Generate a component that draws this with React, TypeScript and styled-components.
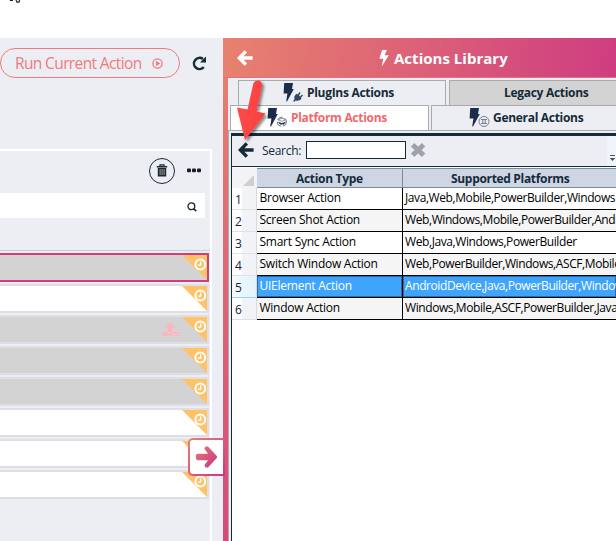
import React from 'react';
import styled, { createGlobalStyle, css } from 'styled-components';

const GlobalStyle = createGlobalStyle`
  *, *::before, *::after { box-sizing: border-box; }
  body {
    margin: 0;
    overflow: hidden;
    background: #fff;
    font-family: 'Open Sans', 'Noto Sans', sans-serif;
    color: #152b37;
  }
  svg { display: block; flex: none; }
`;

const NAVY = '#152b37';
const SURFACE = '#edeef3';

const Screen = styled.div`
  position: relative;
  display: flex;
  flex-direction: column;
  width: 616px;
  height: 541px;
  overflow: hidden;
`;
const TopStrip = styled.div`
  flex: none;
  height: 38px;
  padding-left: 9px;
`;
const Body = styled.div`
  display: flex;
  flex: 1;
  min-height: 0;
`;

/* Left side: current flow */
const FlowPane = styled.section`
  flex: none;
  width: 223px;
  display: flex;
  flex-direction: column;
  background: ${SURFACE};
`;
const RunBar = styled.div`
  display: flex;
  align-items: center;
  height: 111px;
  padding-bottom: 61px;
`;
const RunButton = styled.button`
  display: flex;
  align-items: center;
  width: 180px;
  height: 30px;
  padding: 0 0 0 14px;
  border: 1px solid #f27a7c;
  border-radius: 15px;
  background: transparent;
  color: #f27a7c;
  font: 400 15.5px/28px 'Open Sans', sans-serif;
  letter-spacing: -0.62px;
  white-space: nowrap;
`;
const RunLabel = styled.span`
  width: 137px;
  text-align: left;
`;
const RefreshSlot = styled.div`
  margin-left: 12px;
`;
const FlowBox = styled.div`
  flex: 1;
  width: 212px;
  border: solid #fff;
  border-width: 2px 2px 0 0;
`;
const FlowTools = styled.div`
  display: flex;
  align-items: center;
  justify-content: flex-end;
  gap: 12px;
  height: 42px;
  padding: 0 9px 3px 0;
`;
const TrashButton = styled.button`
  display: flex;
  align-items: center;
  justify-content: center;
  width: 26px;
  height: 26px;
  padding: 0;
  border: 1px solid ${NAVY};
  border-radius: 50%;
  background: transparent;
`;
const FilterField = styled.div`
  display: flex;
  align-items: center;
  justify-content: flex-end;
  width: 205px;
  height: 25px;
  padding: 2px 8px 0 0;
  background: #fff;
`;
const CardList = styled.div`
  display: flex;
  flex-direction: column;
  gap: 2px;
  margin-top: 32px;
  padding-top: 2px;
  border-top: 1px solid #cdced2;
`;
const Card = styled.div<{ $tone: 'gray' | 'white'; $active?: boolean }>`
  display: flex;
  justify-content: flex-end;
  width: 209px;
  height: 29px;
  border: 2px solid ${p => (p.$active ? '#d33d80' : '#dedfe5')};
  border-left: 0;
  background: ${p => (p.$tone === 'gray' ? '#d3d3d3' : '#fff')};
`;
const UploadSlot = styled.div`
  padding: 5px 3px 0 0;
`;

/* Right side: library */
const Library = styled.section`
  flex: 1;
  min-width: 0;
  display: flex;
  flex-direction: column;
  padding-left: 5px;
  background: linear-gradient(133deg, #e8836f 0px, #e07072 110px, #d95078 310px, #ce3681 440px);
`;
const LibraryHeader = styled.header`
  display: flex;
  align-items: center;
  height: 40px;
  margin-left: -5px;
  padding: 1px 0 0 14px;
  border-bottom: 1px solid #e2717b;
  color: #fff;
  background: linear-gradient(97deg, #e8826f 0, #e27272 90px, #dc6078 200px, #d44d7d 300px, #cf3c81 400px);
`;
const LibraryTitle = styled.h1`
  display: flex;
  align-items: center;
  gap: 5px;
  margin: 0 0 0 126px;
  font: 700 15px/20px 'Open Sans', sans-serif;
  letter-spacing: 0.02px;
  white-space: nowrap;
`;
const LibraryBody = styled.div`
  flex: 1;
  display: flex;
  flex-direction: column;
  min-height: 0;
  padding-top: 2px;
  background: ${SURFACE};
`;
const TabRow = styled.div<{ $indent: number; $gap: number }>`
  display: flex;
  flex: none;
  gap: ${p => p.$gap}px;
  height: 25px;
  padding-left: ${p => p.$indent}px;
  overflow: visible;
`;
const Tab = styled.button<{ $width: number; $pad: number; $kind?: 'active' | 'legacy' }>`
  display: flex;
  flex: none;
  align-items: flex-start;
  gap: 3px;
  width: ${p => p.$width}px;
  height: 25px;
  padding: 2px 0 0 ${p => p.$pad}px;
  border: 1px solid #a9abae;
  border-bottom: 0;
  background: ${SURFACE};
  color: ${NAVY};
  font: 700 12px/20px 'Open Sans', sans-serif;
  letter-spacing: -0.3px;
  white-space: nowrap;
  ${p => p.$kind === 'legacy' && css`background: #d3d3d3;`}
  ${p => p.$kind === 'active' && css`
    height: 28px;
    background: #fff;
    color: #f2686b;
  `}
`;
const TabPanel = styled.div`
  flex: 1;
  display: flex;
  flex-direction: column;
  min-height: 0;
  padding: 2px 0 0 2px;
  border: solid #a9abae;
  border-width: 1px 0 0 1px;
  background: ${SURFACE};
`;
const Grid = styled.div`
  flex: 1;
  border-left: 1px solid ${NAVY};
  border-top: 3px solid ${NAVY};
  background: #fff;
`;
const SearchBar = styled.div`
  display: flex;
  align-items: center;
  height: 31px;
  padding: 0 0 2px 6px;
  border-bottom: 1px solid ${NAVY};
  background: ${SURFACE};
  font-size: 12px;
  letter-spacing: -0.3px;
`;
const SearchLabel = styled.label`
  width: 44px;
  margin-left: 8px;
`;
const SearchInput = styled.input`
  width: 100px;
  height: 18px;
  padding: 0 4px;
  border: 1px solid ${NAVY};
  border-radius: 0;
  background: #fff;
`;
const Overflow = styled.div`
  display: flex;
  align-items: flex-end;
  width: 9px;
  height: 30px;
  margin: 2px 0 0 auto;
  padding: 0 0 4px 2px;
  background: #f0f5fc;
`;
const HeadRow = styled.div`
  display: grid;
  grid-template: 20px / 25px 146px 1fr;
  height: 21px;
  padding-top: 1px;
`;
const Corner = styled.div`
  display: flex;
  align-items: flex-end;
  justify-content: flex-end;
  padding: 0 3px 2px 0;
  background: #f3f3f5;
`;
const HeadCell = styled.div<{ $pad: number }>`
  padding-left: ${p => p.$pad}px;
  border: solid #7b8d92;
  border-width: 1px 1px 1px 0;
  background: #ced6e6;
  font: 700 12px/20px 'Open Sans', sans-serif;
  letter-spacing: -0.32px;
  white-space: nowrap;
  &:last-child { border-right: 0; }
`;
const Row = styled.div`
  display: grid;
  grid-template: 22px / 25px 146px 1fr;
  font-size: 12px;
  color: #000;
`;
const RowNumber = styled.div<{ $active: boolean }>`
  padding: 3px 0 0 3px;
  border-right: 1px solid #d9dadd;
  border-bottom: 1px solid ${p => (p.$active ? '#93d5f2' : '#dfe1e4')};
  background: ${p => (p.$active ? 'linear-gradient(90deg, #f2fafd, #e2f3fa)' : 'linear-gradient(90deg, #fff 40%, #f2f3f6 42%)')};
  color: #14213b;
  line-height: 18px;
`;
const Cell = styled.div<{ $alt: boolean; $active: boolean; $dense?: boolean }>`
  overflow: hidden;
  padding-left: ${p => (p.$dense ? 2 : 2.5)}px;
  border: solid #000;
  border-width: 0 1px 1px 0;
  background: ${p => (p.$alt ? '#f5f5f5' : '#fff')};
  line-height: 20px;
  letter-spacing: ${p => (p.$dense ? -0.41 : -0.25)}px;
  white-space: nowrap;
  ${p => p.$active && css`
    background: #3fa4fb;
    color: #fff;
    box-shadow: inset 0 0 0 1px #2a6ca8;
  `}
  &:last-child { border-right: 0; }
`;

/* Floating pieces */
const ExpandButton = styled.button`
  position: absolute;
  left: 188px;
  top: 438px;
  display: flex;
  align-items: center;
  justify-content: center;
  width: 37px;
  height: 38px;
  padding: 0 1px 0 0;
  border: 2px solid transparent;
  border-radius: 5px 0 0 5px;
  background: linear-gradient(#fff, #fff) padding-box,
    linear-gradient(135deg, #e98373, #cc3484) border-box;
`;
const Pointer = styled.svg`
  position: absolute;
  left: 230px;
  top: 74px;
`;

const Clock = () => (
  <svg width="25" height="25" viewBox="0 0 25 25">
    <path d="M0 0H25V25Z" fill="#ffc266" />
    <circle cx="18.3" cy="9.5" r="4.9" fill="none" stroke="#fff" strokeWidth="2" />
    <path d="M18.7 6.6V10.1H16" fill="none" stroke="#fff" strokeWidth="1.4" />
  </svg>
);
const Upload = () => (
  <svg width="17" height="15" viewBox="0 0 17 15" fill="#ffb3bf">
    <path d="M8.3 0 13.5 5.3H10.6V10H6V5.3H3Z" />
    <path d="M.5 10H5.3V11.2H11.3V10H16.5V14H.5Z" />
    <path d="M11 12.1h1.2v1H11zM13.6 12.1h1.2v1h-1.2z" fill="#eee" />
  </svg>
);
const BackArrow = ({ color }: { color: string }) => (
  <svg width="16" height="16" viewBox="0 0 16 16" fill="none" stroke={color} strokeWidth="3.5">
    <path d="M8.8 1.4 2.4 8l6.4 6.6M2.8 8H15.6" strokeLinejoin="miter" />
  </svg>
);
const TabIcon = ({ kind }: { kind: 'plug' | 'layers' | 'general' }) => (
  <svg width="21" height="20" viewBox="0 0 21 20">
    <path d="M1.2 0H10L9 6H10.8L4 18.5H3.2L4.4 10.5H.6Z" fill="#1c2d4c" />
    {kind === 'plug' && (
      <path d="M10 18 11.5 16.2Q10.5 13.5 12.5 11.8L13.7 10.7 14.6 11.6 16.6 9 17.6 10 16 12.4 17.1 13.4 19 11.4 20 12.4 17.9 14.8 18.6 15.8Q16 18.5 12.7 17.5L11.3 18.8Z" fill="#34455f" />
    )}
    {kind === 'layers' && (
      <g fill="none" stroke="#677284" strokeWidth="1">
        <circle cx="14.8" cy="13.8" r="4.6" strokeDasharray="6 2" />
        <path d="M10.8 13.5 15 15.3 19 13.5 17 16.6H13Z" fill="#1c2d4c" stroke="none" />
        <path d="M11.2 11.8 15 10.2l3.6 1.6L15 13.4Z" fill="#fff" stroke="#8a93a0" />
      </g>
    )}
    {kind === 'general' && (
      <g fill="none" stroke="#758092" strokeWidth="1">
        <circle cx="15" cy="13.5" r="5" />
        <path d="M12 11.5h6M12 15.5h6M13.8 11.5v4M16.2 11.5v4" />
      </g>
    )}
  </svg>
);

const cards: { tone: 'gray' | 'white'; active?: boolean; upload?: boolean }[] = [
  { tone: 'gray', active: true },
  { tone: 'white' },
  { tone: 'gray', upload: true },
  { tone: 'gray' },
  { tone: 'gray' },
  { tone: 'white' },
  { tone: 'white' },
  { tone: 'white' },
];

const rows = [
  { type: 'Browser Action', platforms: 'Java,Web,Mobile,PowerBuilder,Windows' },
  { type: 'Screen Shot Action', platforms: 'Web,Windows,Mobile,PowerBuilder,AndroidDevice' },
  { type: 'Smart Sync Action', platforms: 'Web,Java,Windows,PowerBuilder' },
  { type: 'Switch Window Action', platforms: 'Web,PowerBuilder,Windows,ASCF,Mobile' },
  { type: 'UIElement Action', platforms: 'AndroidDevice,Java,PowerBuilder,Windows' },
  { type: 'Window Action', platforms: 'Windows,Mobile,ASCF,PowerBuilder,Java' },
];
const SELECTED = 4;

export default function App() {
  return (
    <Screen>
      <GlobalStyle />
      <TopStrip>
        <svg width="12" height="4" viewBox="0 0 12 4" fill="none" stroke="#222" strokeWidth="1.2">
          <path d="M.8 0.4H4M7 0 8 2.2H10L10.5 0" />
        </svg>
      </TopStrip>
      <Body>
        <FlowPane>
          <RunBar>
            <RunButton>
              <RunLabel>Run Current Action</RunLabel>
              <svg width="11" height="11" viewBox="0 0 11 11">
                <circle cx="5.5" cy="5.5" r="4.6" fill="none" stroke="#f27a7c" strokeWidth="1.3" />
                <path d="M4 2.8 8.2 5.5 4 8.2Z" fill="#f27a7c" />
              </svg>
            </RunButton>
            <RefreshSlot>
              <svg width="15" height="15" viewBox="0 0 15 15">
                <path d="M11.8 11.2A5.6 5.6 0 1 1 11 3" fill="none" stroke={NAVY} strokeWidth="2.5" />
                <path d="M14 0.6V6.6H8Z" fill={NAVY} />
              </svg>
            </RefreshSlot>
          </RunBar>
          <FlowBox>
            <FlowTools>
              <TrashButton>
                <svg width="12" height="13" viewBox="0 0 12 13">
                  <path d="M4 2V.8H8V2" fill="none" stroke={NAVY} strokeWidth="1.2" />
                  <path d="M.8 2H11.2V3.6H.8ZM1.8 4H10.2V12.5H1.8Z" fill={NAVY} />
                  <path d="M4.1 5V11M6.1 5V11M8.1 5V11" stroke="#b09a80" strokeWidth="1" />
                </svg>
              </TrashButton>
              <svg width="14" height="5" viewBox="0 0 14 5" fill="#171d29">
                <rect x="0" y=".5" width="4" height="3.8" rx="1" />
                <rect x="5" y=".5" width="4" height="3.8" rx="1" />
                <rect x="10" y=".5" width="4" height="3.8" rx="1" />
              </svg>
            </FlowTools>
            <FilterField>
              <svg width="10" height="10" viewBox="0 0 10 10" fill="none" stroke={NAVY}>
                <circle cx="4.4" cy="4.3" r="3.4" strokeWidth="1.3" />
                <path d="M6.5 6.5 9.2 9.2" strokeWidth="1.7" />
              </svg>
            </FilterField>
            <CardList>
              {cards.map((c, i) => (
                <Card key={i} $tone={c.tone} $active={c.active}>
                  {c.upload && <UploadSlot><Upload /></UploadSlot>}
                  <Clock />
                </Card>
              ))}
            </CardList>
          </FlowBox>
        </FlowPane>

        <Library>
          <LibraryHeader>
            <BackArrow color="#fff" />
            <LibraryTitle>
              <svg width="10" height="17" viewBox="0 0 10 17" fill="#fff">
                <path d="M3 0H7.8L5.6 5.2H9.8L2.6 16.8 4.3 8.8H.4Z" />
              </svg>
              Actions Library
            </LibraryTitle>
          </LibraryHeader>
          <LibraryBody>
            <TabRow $indent={10} $gap={3}>
              <Tab $width={208} $pad={44}><TabIcon kind="plug" />PlugIns Actions</Tab>
              <Tab $width={208} $pad={54} $kind="legacy">Legacy Actions</Tab>
            </TabRow>
            <TabRow $indent={2} $gap={2}>
              <Tab $width={199} $pad={36} $kind="active"><TabIcon kind="layers" />Platform Actions</Tab>
              <Tab $width={199} $pad={37}><TabIcon kind="general" />General Actions</Tab>
            </TabRow>
            <TabPanel>
              <Grid>
                <SearchBar>
                  <BackArrow color={NAVY} />
                  <SearchLabel>Search:</SearchLabel>
                  <SearchInput />
                  <svg width="24" height="16" viewBox="0 0 24 16">
                    <path d="M6.6 2.8 17.6 13.2M17.6 2.8 6.6 13.2" stroke="#9ea2ab" strokeWidth="5" />
                  </svg>
                  <Overflow>
                    <svg width="7" height="7" viewBox="0 0 7 7">
                      <path d="M1 .5H6" stroke="#555" />
                      <path d="M.6 3H6.4L3.5 6Z" fill="#555" />
                    </svg>
                  </Overflow>
                </SearchBar>
                <HeadRow>
                  <Corner>
                    <svg width="11" height="11" viewBox="0 0 11 11"><path d="M11 0V11H0Z" fill="#cdcfd2" /></svg>
                  </Corner>
                  <HeadCell $pad={39}>Action Type</HeadCell>
                  <HeadCell $pad={48}>Supported Platforms</HeadCell>
                </HeadRow>
                {rows.map((r, i) => (
                  <Row key={r.type}>
                    <RowNumber $active={i === SELECTED}>{i + 1}</RowNumber>
                    <Cell $alt={i % 2 === 1} $active={i === SELECTED}>{r.type}</Cell>
                    <Cell $alt={i % 2 === 1} $active={i === SELECTED} $dense>{r.platforms}</Cell>
                  </Row>
                ))}
              </Grid>
            </TabPanel>
          </LibraryBody>
        </Library>
      </Body>

      <ExpandButton>
        <svg width="23" height="24" viewBox="0 0 23 24">
          <defs>
            <linearGradient id="arrowFill" x1="0" y1="0" x2="1" y2="1">
              <stop offset="0" stopColor="#e57a76" />
              <stop offset="1" stopColor="#cb3583" />
            </linearGradient>
          </defs>
          <path d="M10.5 1.5 13 1.4 22 11.2V12.8L13 22.6 10.5 22.5 9.4 20.2 13 15.2H2.2Q.8 15 .8 12T2.2 8.8H13L9.4 3.8Z" fill="url(#arrowFill)" />
        </svg>
      </ExpandButton>
      <Pointer width="46" height="76" viewBox="0 0 46 76">
        <defs>
          <linearGradient id="pointerFill" x1="0" y1="0" x2="1" y2="0.15">
            <stop offset="0" stopColor="#ff4a4a" />
            <stop offset="1" stopColor="#fb4040" />
          </linearGradient>
          <filter id="pointerShadow" x="-30%" y="-20%" width="170%" height="150%">
            <feDropShadow dx="2" dy="2" stdDeviation="1.6" floodColor="#000" floodOpacity=".5" />
          </filter>
        </defs>
        <path
          d="M23.5 9Q25 6 28.5 6.5T32 11L26.5 37.5 35.5 39.5 15 66 7 33.5 17.5 35.5Z"
          fill="url(#pointerFill)"
          filter="url(#pointerShadow)"
        />
      </Pointer>
    </Screen>
  );
}
